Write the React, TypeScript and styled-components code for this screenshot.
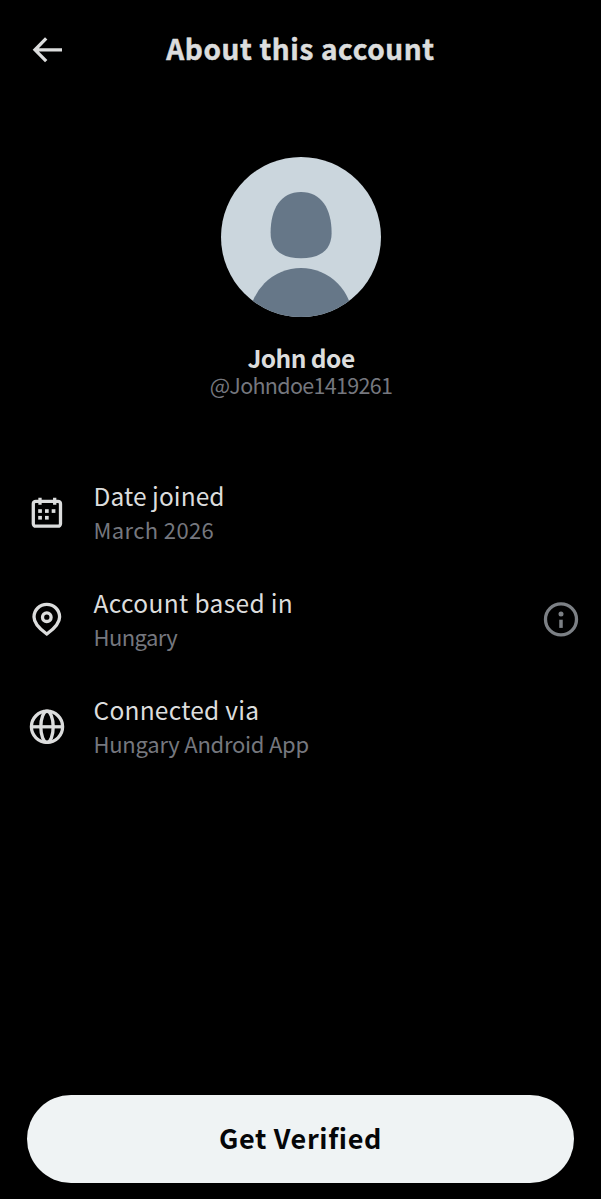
import React from "react";
import styled, { createGlobalStyle } from "styled-components";

const GlobalStyle = createGlobalStyle`
  * { box-sizing: border-box; }
  body { margin: 0; background: #000; }
`;

const Screen = styled.main`
  width: 601px;
  height: 1199px;
  display: flex;
  flex-direction: column;
  background: #000;
  color: #dcdddd;
  font-family: "Noto Sans CJK JP", "Noto Sans", sans-serif;
  font-kerning: normal;
  white-space: nowrap;
`;

const Header = styled.header`
  height: 100px;
  display: grid;
  grid-template-columns: 96px 1fr 96px;
  align-items: center;
`;

const BackButton = styled.button`
  margin: 0 0 0 29px;
  padding: 0;
  width: 36px;
  height: 36px;
  border: 0;
  background: none;
  color: inherit;
`;

const Title = styled.h1`
  margin: 0 0 4px;
  text-align: center;
  font-size: 28px;
  line-height: 36px;
  font-weight: 700;
  letter-spacing: 0.62px;
  -webkit-text-stroke: 0.5px currentColor;
`;

const Profile = styled.section`
  display: flex;
  flex-direction: column;
  align-items: center;
  padding: 57px 0 0 1px;
`;

const Avatar = styled.svg`
  width: 160px;
  height: 160px;
  border-radius: 50%;
  background: #cbd6dd;
`;

const Name = styled.h2`
  margin: 24px 0 0;
  font-size: 24.5px;
  line-height: 33px;
  font-weight: 700;
  letter-spacing: -0.55px;
`;

const Handle = styled.div`
  color: #75777e;
  font-size: 21.5px;
  line-height: 22px;
  letter-spacing: -0.68px;
`;

const Facts = styled.ul`
  list-style: none;
  margin: 82px 0 0;
  padding: 0 22px 0 29px;
  display: flex;
  flex-direction: column;
  gap: 37px;
`;

const Fact = styled.li`
  height: 70px;
  display: flex;
  align-items: center;
`;

const Icon = styled.svg`
  display: block;
  width: 36px;
  height: 36px;
  flex: none;
  fill: none;
  stroke: currentColor;
  stroke-width: 3.3;
`;

const InfoButton = styled.button`
  padding: 0;
  border: 0;
  background: none;
  color: #7c8085;
`;

const FactText = styled.div`
  flex: 1;
  padding: 0 0 2px 28.5px;
`;

const Label = styled.div<{ $tracking: number }>`
  font-size: 24.5px;
  line-height: 34px;
  letter-spacing: ${(p) => p.$tracking}px;
`;

const Value = styled.div<{ $tracking: number }>`
  color: #75777e;
  font-size: 22px;
  line-height: 33px;
  letter-spacing: ${(p) => p.$tracking}px;
`;

const VerifyButton = styled.button`
  margin: auto 27px 16px;
  height: 88px;
  padding: 0 0 2px;
  border: 0;
  border-radius: 44px;
  background: #eff3f4;
  color: #050608;
  font-family: inherit;
  font-size: 27px;
  font-weight: 700;
  line-height: 36px;
  letter-spacing: 0.65px;
`;

const CalendarIcon = () => (
  <Icon viewBox="0 0 36 36">
    <rect x="4.3" y="6.3" width="27.2" height="24.9" rx="2.5" />
    <path d="M11 2.7v7M25.7 2.7v7" />
    <g fill="currentColor" stroke="none">
      <rect x="9.2" y="14.2" width="3.7" height="3.7" />
      <rect x="16" y="14.2" width="3.7" height="3.7" />
      <rect x="22.7" y="14.2" width="3.7" height="3.7" />
      <rect x="9.2" y="20.9" width="3.7" height="3.7" />
      <rect x="16" y="20.9" width="3.7" height="3.7" />
    </g>
  </Icon>
);

const PinIcon = () => (
  <Icon viewBox="0 0 36 36">
    <path d="M17.8 32 C13.5 28.8 5 23.2 5 15 A12.8 12.7 0 0 1 30.6 15 C30.6 23.2 22.1 28.8 17.8 32Z" />
    <circle cx="17.8" cy="15.2" r="4.3" />
  </Icon>
);

const GlobeIcon = () => (
  <Icon viewBox="0 0 36 36">
    <circle cx="18" cy="17.8" r="15.6" />
    <ellipse cx="18" cy="17.8" rx="6.2" ry="15.6" />
    <path d="M2.3 17.8h31.4" />
  </Icon>
);

const facts = [
  { label: "Date joined", value: "March 2026", icon: <CalendarIcon />, lt: 0.08, vt: 0.38, info: false },
  { label: "Account based in", value: "Hungary", icon: <PinIcon />, lt: 0.35, vt: -0.6, info: true },
  { label: "Connected via", value: "Hungary Android App", icon: <GlobeIcon />, lt: 0.25, vt: -0.25, info: false },
];

export default function App() {
  return (
    <Screen>
      <GlobalStyle />
      <Header>
        <BackButton aria-label="Back">
          <Icon viewBox="0 0 36 36">
            <path d="M33 17.8H6M17.2 6.4L6 17.8L17.2 29.2" />
          </Icon>
        </BackButton>
        <Title>About this account</Title>
      </Header>
      <Profile>
        <Avatar viewBox="0 0 160 160">
          <path
            fill="#667788"
            d="M80 35C100.5 35 110.6 52 110.6 76C110.6 94 98 101.2 80 101.2C62 101.2 49.6 94 49.6 76C49.6 52 59.5 35 80 35Z"
          />
          <circle fill="#667788" cx="80" cy="162.7" r="51.7" />
        </Avatar>
        <Name>John doe</Name>
        <Handle>@Johndoe1419261</Handle>
      </Profile>
      <Facts>
        {facts.map((f) => (
          <Fact key={f.label}>
            {f.icon}
            <FactText>
              <Label $tracking={f.lt}>{f.label}</Label>
              <Value $tracking={f.vt}>{f.value}</Value>
            </FactText>
            {f.info && (
              <InfoButton aria-label="More information">
                <Icon viewBox="0 0 36 36">
                  <circle cx="18" cy="17.4" r="15.5" />
                  <circle cx="18" cy="11.9" r="2.5" fill="currentColor" stroke="none" />
                  <path d="M18 17.7v8.2" strokeWidth="3.5" />
                </Icon>
              </InfoButton>
            )}
          </Fact>
        ))}
      </Facts>
      <VerifyButton>Get Verified</VerifyButton>
    </Screen>
  );
}
